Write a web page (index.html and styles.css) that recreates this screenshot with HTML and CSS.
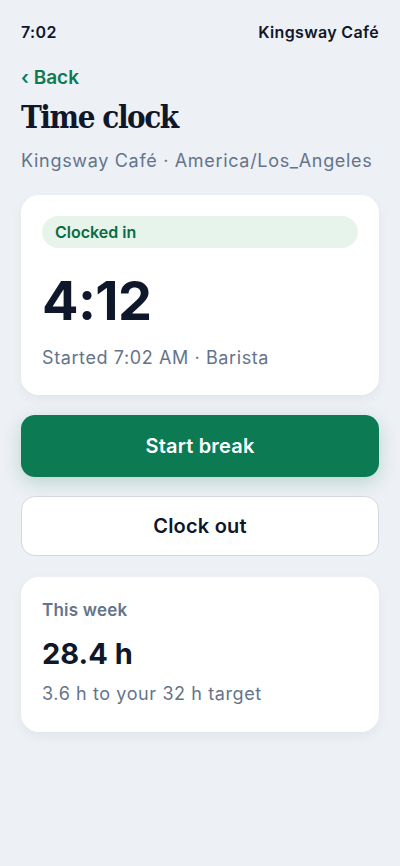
FILE: index.html
```html
<!DOCTYPE html>
<html lang="en">
<head>
<meta charset="utf-8">
<title>Time clock</title>
<link rel="stylesheet" href="styles.css">
</head>
<body>
<div class="screen">
  <div class="status">
    <span>7:02</span>
    <span>Kingsway Café</span>
  </div>
  <a class="back" href="#">‹ Back</a>
  <h1 class="title">Time clock</h1>
  <p class="subtitle">Kingsway Café · America/Los_Angeles</p>

  <section class="card">
    <div class="badge">Clocked in</div>
    <div class="timer">4:12</div>
    <div class="meta">Started 7:02 AM · Barista</div>
  </section>

  <button class="btn btn-primary">Start break</button>
  <button class="btn btn-secondary">Clock out</button>

  <section class="card week">
    <div class="label">This week</div>
    <div class="hours">28.4 h</div>
    <div class="meta">3.6 h to your 32 h target</div>
  </section>
</div>
</body>
</html>
```

FILE: styles.css
```css
* { box-sizing: border-box; }
html, body {
  margin: 0;
  padding: 0;
  background: #edf0f5;
}
body {
  font-family: Inter, "Noto Sans", sans-serif;
  color: #0f172a;
}
.screen {
  padding: 20px 21px 40px;
  display: flex;
  flex-direction: column;
}
.status {
  display: flex;
  justify-content: space-between;
  font-size: 16px;
  font-weight: 600;
  line-height: 24px;
  letter-spacing: 0.35px;
  color: #0f172a;
}
.back {
  margin-top: 22px;
  font-size: 19px;
  font-weight: 600;
  line-height: 24px;
  color: #0f7a50;
  text-decoration: none;
}
.title {
  margin: 9px 0 0;
  font-family: "DejaVu Serif", "Liberation Serif", serif;
  font-stretch: condensed;
  font-weight: 700;
  font-size: 31px;
  line-height: 36px;
  letter-spacing: -1.4px;
  color: #0f172a;
}
.subtitle {
  margin: 13px 0 0;
  font-size: 18px;
  line-height: 26px;
  letter-spacing: 0.68px;
  color: #64748b;
}
.card {
  margin-top: 21px;
  background: #fff;
  border-radius: 18px;
  padding: 21px 21px 25px;
  box-shadow: 0 4px 12px rgba(15, 23, 42, 0.05);
  display: flex;
  flex-direction: column;
}
.badge {
  height: 32px;
  border-radius: 16px;
  background: #e6f4ec;
  color: #0b6b44;
  font-size: 16px;
  font-weight: 600;
  line-height: 32px;
  padding: 0 13px;
}
.timer {
  margin-top: 21px;
  font-size: 54px;
  font-weight: 700;
  line-height: 64px;
  letter-spacing: -0.6px;
  color: #0f172a;
}
.meta {
  margin-top: 13px;
  font-size: 18px;
  line-height: 24px;
  letter-spacing: 0.6px;
  color: #64748b;
}
.btn {
  display: block;
  width: 100%;
  font-family: Inter, "Noto Sans", sans-serif;
  font-size: 20px;
  font-weight: 600;
  letter-spacing: 0.2px;
  border-radius: 14px;
  cursor: pointer;
}
.btn-primary {
  margin-top: 20px;
  height: 62px;
  border: none;
  background: #0c7a52;
  color: #fff;
  box-shadow: 0 6px 18px rgba(12, 122, 82, 0.22);
}
.btn-secondary {
  margin-top: 19px;
  height: 60px;
  background: #fff;
  border: 1px solid #d3d8e0;
  color: #0f172a;
}
.week {
  padding: 22px 21px 26px;
}
.label {
  font-size: 17px;
  font-weight: 600;
  line-height: 22px;
  letter-spacing: 0.2px;
  color: #64748b;
}
.hours {
  margin-top: 15px;
  font-size: 29px;
  font-weight: 700;
  line-height: 36px;
  color: #0f172a;
}
.week .meta {
  margin-top: 10px;
}
```
